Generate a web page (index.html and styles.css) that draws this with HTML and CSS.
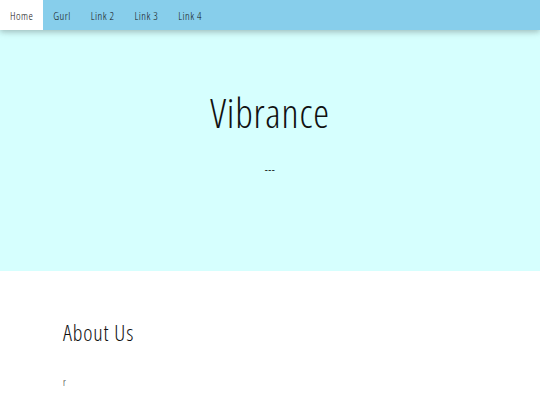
FILE: index.html
```html
<!DOCTYPE html>
<html>
<head>
<meta charset="utf-8">
<link rel="stylesheet" href="styles.css">
</head>
<body>
<nav class="bar">
  <a class="item active">Home</a>
  <a class="item">Gurl</a>
  <a class="item">Link 2</a>
  <a class="item">Link 3</a>
  <a class="item">Link 4</a>
</nav>
<header class="hero">
  <h1 class="title">Vibrance</h1>
  <p class="dash">---</p>
</header>
<section class="about">
  <h2 class="about-title">About Us</h2>
  <p class="about-text">r</p>
</section>
</body>
</html>
```
FILE: styles.css
```css
html, body { margin: 0; padding: 0; }
body {
  font-family: "Open Sans", "Liberation Sans", sans-serif;
  font-stretch: 75%;
  font-weight: 300;
  color: #111;
  background: #fff;
  overflow: hidden;
}
.bar {
  display: flex;
  height: 30px;
  background: #87ceeb;
  box-shadow: 0 2px 5px rgba(0,0,0,0.16), 0 2px 10px rgba(0,0,0,0.12);
  position: relative;
  z-index: 2;
}
.item {
  display: flex;
  align-items: center;
  padding: 0 10px;
  font-size: 11px;
  font-weight: 300;
  letter-spacing: 0.45px;
  color: #111;
}
.active { background: #fff; }
.hero {
  height: 241px;
  box-sizing: border-box;
  padding-top: 63px;
  background: #d6fffe;
  display: flex;
  flex-direction: column;
  align-items: center;
  text-align: center;
}
.title {
  margin: 0;
  font-size: 40px;
  font-weight: 350;
  line-height: 40px;
  letter-spacing: 0.8px;
}
.dash {
  margin: 29px 0 0;
  font-size: 11px;
  font-weight: 400;
  line-height: 14px;
  letter-spacing: 0.5px;
}
.about {
  padding: 46px 63px 0;
}
.about-title {
  margin: 0;
  font-size: 22px;
  font-weight: 350;
  line-height: 30px;
  letter-spacing: 0.85px;
}
.about-text {
  margin: 28px 0 0;
  font-size: 10px;
  font-weight: 300;
  line-height: 14px;
}
```
